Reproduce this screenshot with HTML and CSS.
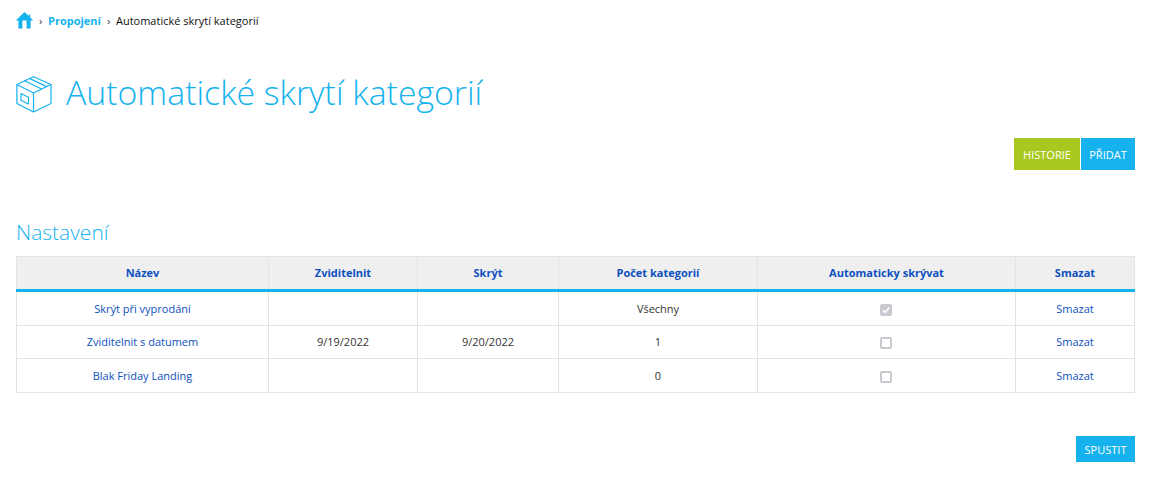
FILE: index.html
```html
<!DOCTYPE html>
<html lang="cs">
<head>
<meta charset="utf-8">
<title>Automatické skrytí kategorií</title>
<link rel="stylesheet" href="styles.css">
</head>
<body>
<nav class="crumbs">
  <a class="home" href="#" aria-label="Domů">
    <svg width="17" height="17" viewBox="0 0 17 17"><path d="M8.5 0 L13 4 V2.5 H14.2 V5.2 L17.2 8.4 H14.6 V16.5 H10.6 V8.4 H6.4 V16.5 H2.4 V8.4 H-.2 Z" fill="#15b2ee"/></svg>
  </a>
  <span class="sep">›</span>
  <a class="crumb-link" href="#">Propojení</a>
  <span class="sep">›</span>
  <span class="crumb-current">Automatické skrytí kategorií</span>
</nav>
<header class="title-row">
  <svg class="title-icon" width="36" height="37" viewBox="0 0 36 37" fill="none" stroke="#15b2ee" stroke-width="1.2" stroke-linejoin="round">
    <path d="M17.5 .7 L35 8.5 V27.5 L17.5 36 L.9 27.5 V8.5 Z"/>
    <path d="M.9 8.5 L17.5 17 L35 8.5"/>
    <path d="M17.5 17 V36"/>
    <path d="M8 4.5 L25.5 13"/>
    <path d="M13.5 2.4 L30.5 10.6"/>
    <path d="M5 17.5 L12.5 21.3 V28 L5 24.2 Z"/>
  </svg>
  <h1>Automatické skrytí kategorií</h1>
</header>
<div class="actions">
  <a class="btn btn-green" href="#">HISTORIE</a>
  <a class="btn btn-blue" href="#">PŘIDAT</a>
</div>
<h2>Nastavení</h2>
<table>
  <colgroup>
    <col class="c1"><col class="c2"><col class="c3"><col class="c4"><col class="c5"><col class="c6">
  </colgroup>
  <thead>
    <tr><th>Název</th><th>Zviditelnit</th><th>Skrýt</th><th>Počet kategorií</th><th>Automaticky skrývat</th><th>Smazat</th></tr>
  </thead>
  <tbody>
    <tr class="r1">
      <td><a href="#">Skrýt při vyprodání</a></td><td></td><td></td><td>Všechny</td>
      <td class="check-cell"><span class="check checked"><svg width="12" height="12" viewBox="0 0 12 12"><path d="M2.8 6.2 L5 8.4 L9.3 3.6" fill="none" stroke="#fff" stroke-width="1.6"/></svg></span></td>
      <td><a href="#">Smazat</a></td>
    </tr>
    <tr class="r2">
      <td><a href="#">Zviditelnit s datumem</a></td><td>9/19/2022</td><td>9/20/2022</td><td>1</td>
      <td class="check-cell"><span class="check"></span></td>
      <td><a href="#">Smazat</a></td>
    </tr>
    <tr class="r3">
      <td><a href="#">Blak Friday Landing</a></td><td></td><td></td><td>0</td>
      <td class="check-cell"><span class="check"></span></td>
      <td><a href="#">Smazat</a></td>
    </tr>
  </tbody>
</table>
<div class="run-row"><a class="btn btn-blue btn-run" href="#">SPUSTIT</a></div>
</body>
</html>
```
FILE: styles.css
```css
* { box-sizing: border-box; }
html, body { margin: 0; padding: 0; }
body {
  background: #fff;
  color: #333;
  font-family: "Open Sans", sans-serif;
  font-size: 11px;
  padding: 12px 14px 0 16px;
  height: 489px;
  overflow: hidden;
}
a { text-decoration: none; color: #0e50c0; }

.crumbs { display: flex; align-items: center; height: 17px; font-size: 11px; }
.home { display: flex; width: 17px; height: 17px; }
.sep { color: #333; font-size: 11px; margin: 0 6px; width: 3px; line-height: 15px; }
.crumb-link { color: #15b2ee; font-weight: 700; margin-left: 3px; }
.crumbs .sep:first-of-type { margin-left: 6px; margin-right: 3px; }
.crumb-current { color: #111; }

.title-row { display: flex; align-items: center; gap: 14px; margin-top: 46px; height: 38px; }
.title-icon { flex: none; }
h1 { margin: 0 0 4px; font-size: 33.8px; font-weight: 300; color: #15b2ee; line-height: 38px; white-space: nowrap; }

.actions { display: flex; justify-content: flex-end; gap: 1px; margin-top: 25px; }
.btn { display: flex; align-items: center; justify-content: center; color: #fff; font-size: 11px; height: 32px; }
.btn-green { background: #a8c81f; width: 66px; }
.btn-blue { background: #15b2ee; width: 54px; }

h2 { margin: 49px 0 0; font-size: 21px; font-weight: 300; color: #15b2ee; line-height: 27px; height: 27px; }

table { width: 1118px; margin-top: 10px; border-collapse: collapse; table-layout: fixed; }
.c1 { width: 252px; } .c2 { width: 149px; } .c3 { width: 141px; }
.c4 { width: 199px; } .c5 { width: 258px; } .c6 { width: 119px; }
th, td { border: 1px solid #e3e3e3; text-align: center; padding: 0; vertical-align: middle; }
th { background: #efefef; color: #0e50c0; font-weight: 700; font-size: 11px; height: 34px; padding-bottom: 2px; border-bottom: 3px solid #15b2ee; }
td { color: #333; font-size: 11px; }
.r1 td { height: 35px; }
.r2 td { height: 33px; padding-bottom: 2px; }
.r3 td { height: 34px; }
.r1 td.check-cell, .r2 td.check-cell, .r3 td.check-cell { padding-right: 2px; }

.check { display: block; width: 12px; height: 12px; margin: 2px auto 0; border: 2px solid #c9c9cf; border-radius: 2px; background: #fff; }
.check.checked { background: #c9c9cf; }
.check svg { display: block; margin: -2px; }
.r2 .check { margin-top: 4px; }

.run-row { display: flex; justify-content: flex-end; margin-top: 43px; }
.btn-run { width: 59px; height: 26px; }
```
